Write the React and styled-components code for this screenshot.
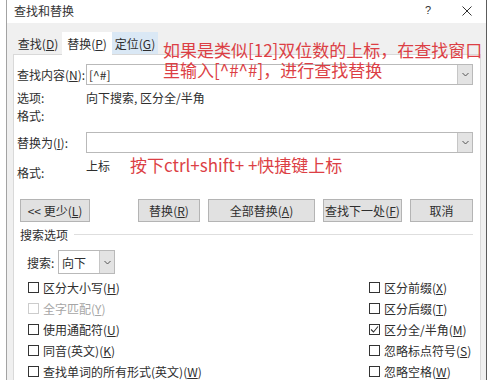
import React from 'react';
import styled, { createGlobalStyle } from 'styled-components';

const Global = createGlobalStyle`
  html, body { margin: 0; padding: 0; background: #fff; }
  body {
    font-family: "Noto Sans CJK SC", "Microsoft YaHei", sans-serif;
    font-size: 12px;
    color: #2e2e2e;
  }
  u { text-underline-offset: 1px; }
`;

const Screen = styled.div`
  position: relative;
  width: 500px;
  height: 380px;
  overflow: hidden;
  background: #fff;
`;

const Dialog = styled.div`
  margin-left: 6px;
  width: 479px;
  height: 380px;
  border-left: 1px solid #a3a3a3;
  border-right: 1px solid #5c5c5c;
  background: #f0f0f0;
  display: flex;
  flex-direction: column;
`;

const TitleBar = styled.div`
  height: 21px;
  flex: none;
  background: #fff;
  display: flex;
  align-items: center;
  padding: 0 14px 2px 7px;
  line-height: 1;
`;

const Title = styled.span`
  font-size: 12px;
  color: #333;
`;

const TitleControls = styled.div`
  margin-left: auto;
  display: flex;
  align-items: center;
  gap: 31px;
  color: #333;
`;

const Help = styled.span`
  font-family: "Liberation Sans", sans-serif;
  font-size: 11px;
`;

const Body = styled.div`
  flex: 1;
  display: flex;
  flex-direction: column;
  padding: 9px 5px 0 6px;
`;

const Tabs = styled.div`
  display: flex;
  height: 22px;
  padding-left: 1px;
  position: relative;
  z-index: 1;
`;

const Tab = styled.div`
  width: ${p => p.$w}px;
  height: ${p => (p.$active ? 23 : 22)}px;
  display: flex;
  align-items: center;
  justify-content: center;
  background: ${p => (p.$active ? '#fff' : p.$hover ? '#dae8f5' : 'transparent')};
`;

const Panel = styled.div`
  flex: 1;
  background: #fff;
  border: 1px solid #d9d9d9;
  display: flex;
  flex-direction: column;
  padding: 9px 7px 0 3px;
`;

const FieldRow = styled.div`
  display: flex;
  align-items: center;
  height: 21px;
  margin-top: ${p => p.$mt || 0}px;
`;

const Label = styled.div`
  width: 69px;
  flex: none;
  white-space: nowrap;
`;

const Combo = styled.div`
  flex: 1;
  height: 21px;
  box-sizing: border-box;
  border: 1px solid #b9b9b9;
  display: flex;
  align-items: center;
  padding-left: 2px;
`;

const ComboText = styled.span`
  flex: 1;
`;

const ArrowBox = styled.div`
  width: 14px;
  align-self: stretch;
  background: #e3e3e3;
  border-left: 1px solid #c6c6c6;
  display: flex;
  align-items: center;
  justify-content: center;
`;

const InfoRow = styled.div`
  display: flex;
  align-items: center;
  height: 18px;
  margin-top: ${p => p.$mt || 0}px;
`;

const FormatRow = styled.div`
  display: flex;
  height: 25px;
  margin-top: 4px;
`;

const FormatLabel = styled(Label)`
  align-self: flex-end;
  line-height: 18px;
`;

const FormatValue = styled.div`
  align-self: flex-start;
  line-height: 18px;
`;

const ButtonRow = styled.div`
  display: flex;
  justify-content: space-between;
  margin-top: 17px;
  padding-left: 3px;
`;

const ButtonGroup = styled.div`
  display: flex;
  gap: 8px;
`;

const Button = styled.div`
  width: ${p => p.$w}px;
  height: 23px;
  box-sizing: border-box;
  background: #e1e1e1;
  border: 1px solid #b4b4b4;
  display: flex;
  align-items: center;
  justify-content: center;
  white-space: nowrap;
`;

const SectionHeader = styled.div`
  display: flex;
  align-items: center;
  height: 16px;
  margin-top: 4px;
  padding-left: 3px;
`;

const Rule = styled.div`
  flex: 1;
  height: 1px;
  background: #dedede;
  margin-left: 6px;
`;

const SearchRow = styled.div`
  display: flex;
  align-items: center;
  height: 24px;
  margin-top: 8px;
  padding-left: 10px;
`;

const SearchLabel = styled.div`
  width: 31px;
`;

const Select = styled(Combo)`
  flex: none;
  width: 57px;
  height: 24px;
  padding-left: 3px;
`;

const CheckGrid = styled.div`
  display: grid;
  grid-template-columns: 341px 1fr;
  grid-template-rows: repeat(5, 21px);
  grid-auto-flow: column;
  margin-top: 3px;
  padding-left: 11px;
`;

const CheckItem = styled.div`
  display: flex;
  align-items: center;
  gap: 4px;
  color: ${p => (p.$disabled ? '#a6a6a6' : '#2e2e2e')};
  white-space: nowrap;
`;

const Box = styled.span`
  width: 11px;
  height: 11px;
  box-sizing: border-box;
  border: 1px solid ${p => (p.$disabled ? '#cccccc' : '#333')};
  background: #fff;
  display: flex;
  align-items: center;
  justify-content: center;
  flex: none;
`;

const Note = styled.div`
  position: absolute;
  left: ${p => p.$x}px;
  top: ${p => p.$y}px;
  color: #dc3f45;
  font-size: 17px;
  line-height: 20px;
  white-space: nowrap;
  font-family: "Noto Sans CJK SC", "Microsoft YaHei", sans-serif;
  z-index: 5;
`;

const Chevron = () => (
  <svg width="7" height="5" viewBox="0 0 7 5">
    <path d="M0.5 1 L3.5 4 L6.5 1" fill="none" stroke="#555" strokeWidth="1" />
  </svg>
);

const Check = ({ label, disabled, checked }) => (
  <CheckItem $disabled={disabled}>
    <Box $disabled={disabled}>
      {checked && (
        <svg width="9" height="9" viewBox="0 0 9 9">
          <path d="M1 4.5 L3.5 7 L8 1.5" fill="none" stroke="#333" strokeWidth="1.1" />
        </svg>
      )}
    </Box>
    <span>{label}</span>
  </CheckItem>
);

const k = (text, key, tail = ')') => (
  <>
    {text}(<u>{key}</u>{tail}
  </>
);

export default function App() {
  return (
    <Screen>
      <Global />
      <Dialog>
        <TitleBar>
          <Title>查找和替换</Title>
          <TitleControls>
            <Help>?</Help>
            <svg width="10" height="10" viewBox="0 0 10 10">
              <path d="M0.5 0.5 L9.5 9.5 M9.5 0.5 L0.5 9.5" stroke="#333" strokeWidth="1" />
            </svg>
          </TitleControls>
        </TitleBar>
        <Body>
          <Tabs>
            <Tab $w={48}>{k('查找', 'D')}</Tab>
            <Tab $w={50} $active>{k('替换', 'P')}</Tab>
            <Tab $w={46} $hover>{k('定位', 'G')}</Tab>
          </Tabs>
          <Panel>
            <FieldRow>
              <Label>{k('查找内容', 'N', '):')}</Label>
              <Combo>
                <ComboText>[^#]</ComboText>
                <ArrowBox><Chevron /></ArrowBox>
              </Combo>
            </FieldRow>
            <InfoRow $mt={3}>
              <Label>选项:</Label>
              <span>向下搜索, 区分全/半角</span>
            </InfoRow>
            <InfoRow>
              <Label>格式:</Label>
            </InfoRow>
            <FieldRow $mt={8}>
              <Label>{k('替换为', 'I', '):')}</Label>
              <Combo>
                <ComboText />
                <ArrowBox><Chevron /></ArrowBox>
              </Combo>
            </FieldRow>
            <FormatRow>
              <FormatLabel>格式:</FormatLabel>
              <FormatValue>上标</FormatValue>
            </FormatRow>
            <ButtonRow>
              <Button $w={70}>&lt;&lt; {k('更少', 'L')}</Button>
              <ButtonGroup>
                <Button $w={62}>{k('替换', 'R')}</Button>
                <Button $w={107}>{k('全部替换', 'A')}</Button>
                <Button $w={79}>{k('查找下一处', 'F')}</Button>
                <Button $w={63}>取消</Button>
              </ButtonGroup>
            </ButtonRow>
            <SectionHeader>
              <span>搜索选项</span>
              <Rule />
            </SectionHeader>
            <SearchRow>
              <SearchLabel>搜索:</SearchLabel>
              <Select>
                <ComboText>向下</ComboText>
                <ArrowBox><Chevron /></ArrowBox>
              </Select>
            </SearchRow>
            <CheckGrid>
              <Check label={k('区分大小写', 'H')} />
              <Check label={k('全字匹配', 'Y')} disabled />
              <Check label={k('使用通配符', 'U')} />
              <Check label={<>同音(英文){'('}<u>K</u>)</>} />
              <Check label={<>查找单词的所有形式(英文){'('}<u>W</u>)</>} />
              <Check label={k('区分前缀', 'X')} />
              <Check label={k('区分后缀', 'T')} />
              <Check label={k('区分全/半角', 'M')} checked />
              <Check label={k('忽略标点符号', 'S')} />
              <Check label={k('忽略空格', 'W')} />
            </CheckGrid>
          </Panel>
        </Body>
      </Dialog>
      <Note $x={163} $y={40}>
        如果是类似[12]双位数的上标，在查找窗口
        <br />
        里输入[^#^#]，进行查找替换
      </Note>
      <Note $x={130} $y={155}>按下ctrl+shift+ +快捷键上标</Note>
    </Screen>
  );
}
